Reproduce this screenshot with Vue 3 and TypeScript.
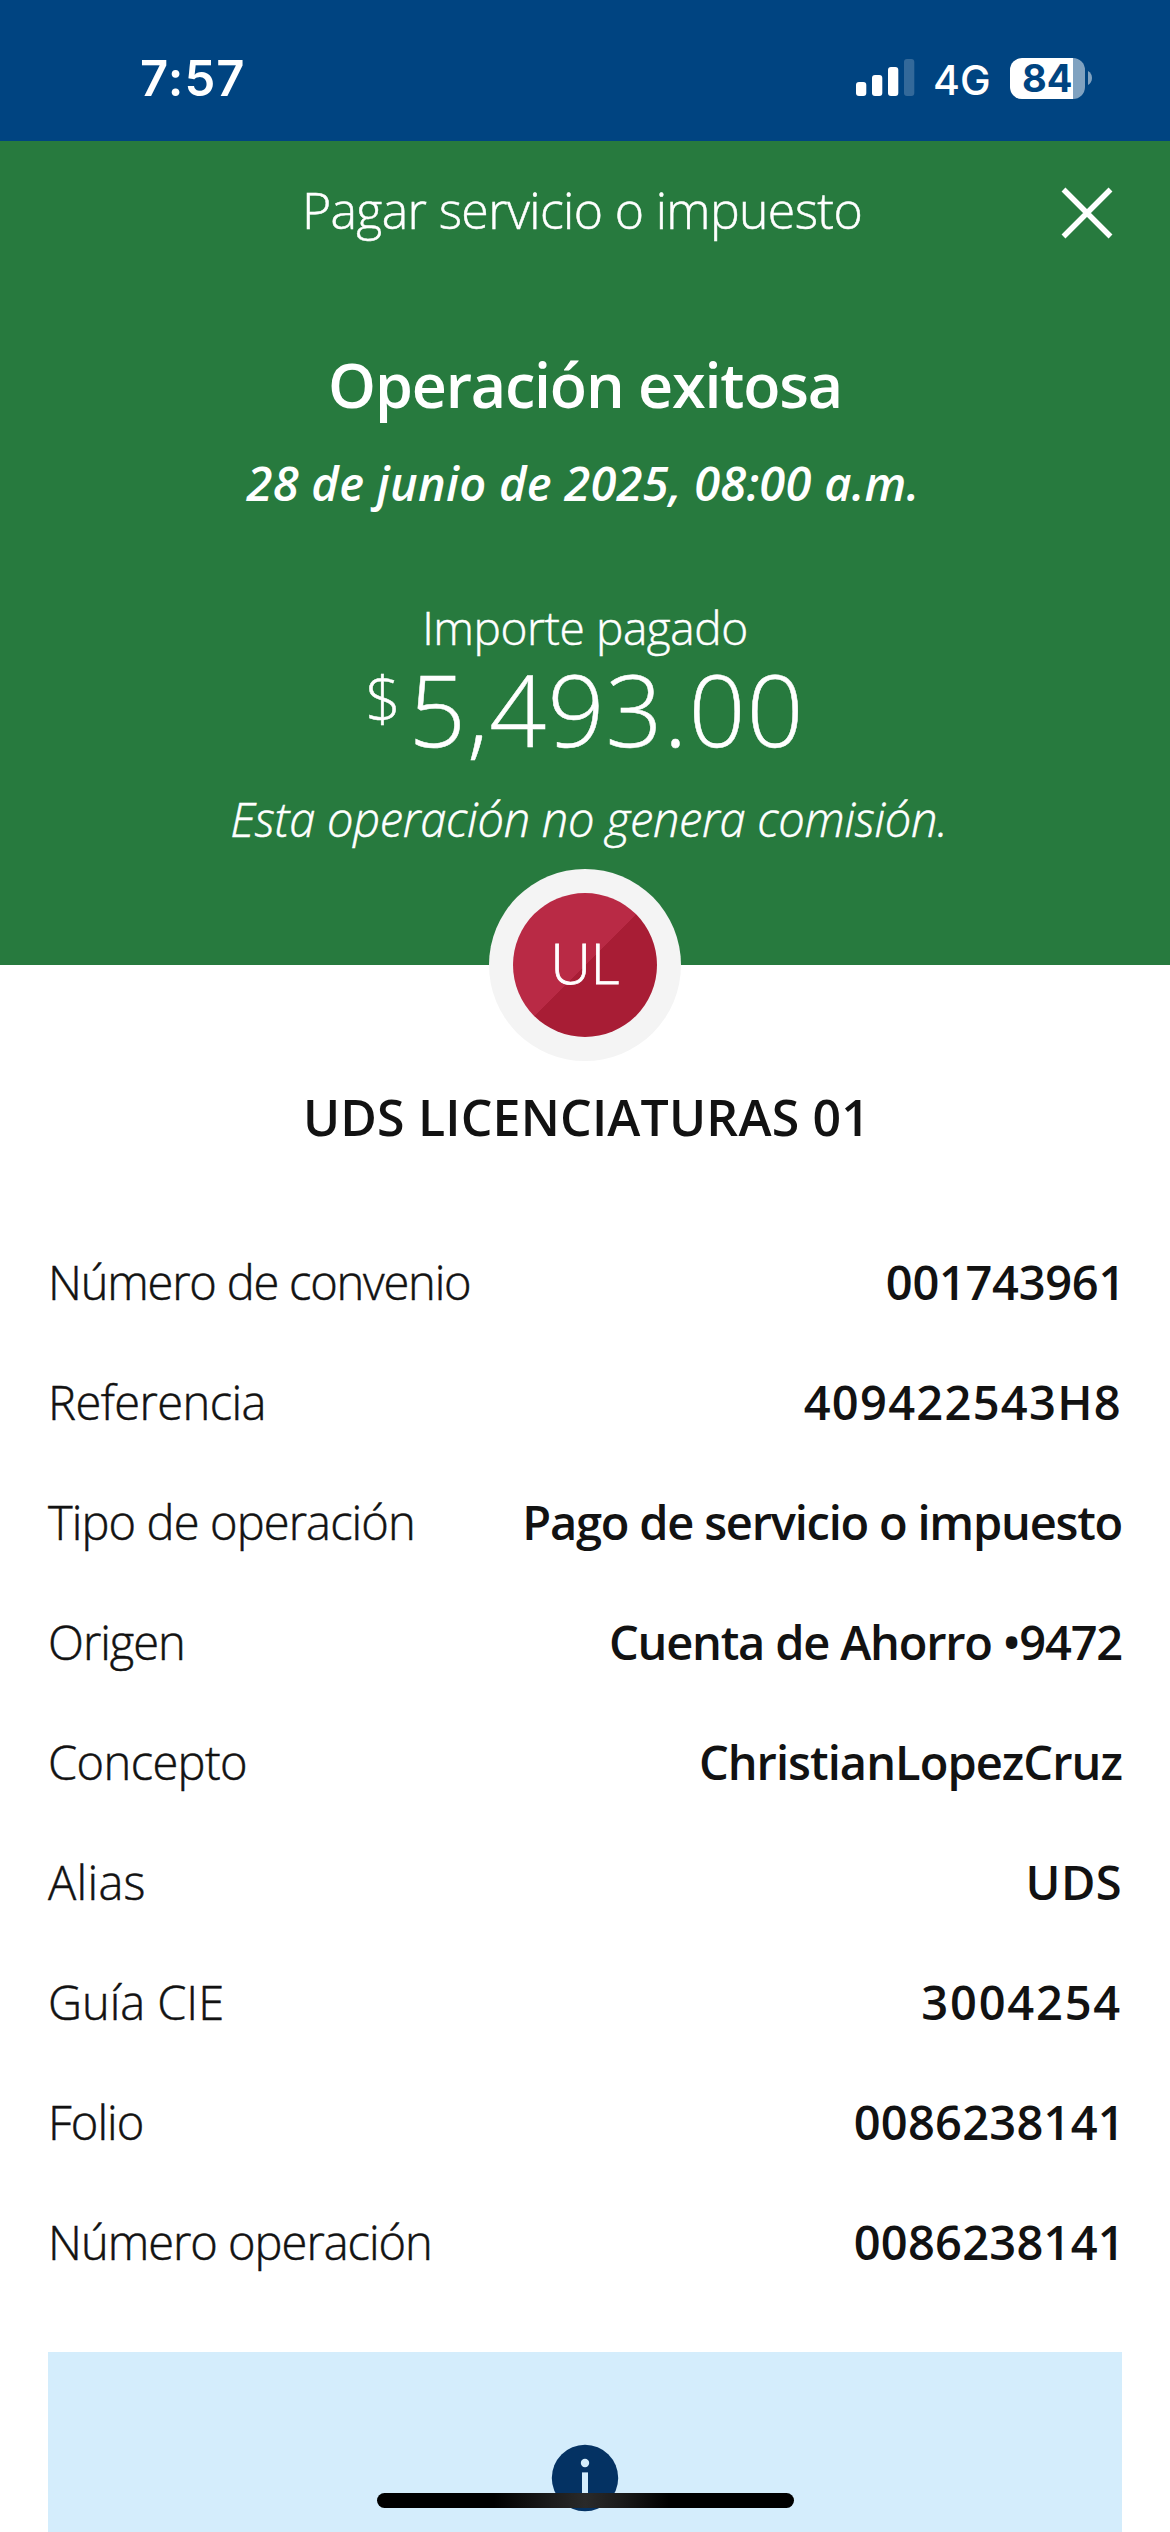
<script setup lang="ts">
interface Row {
  label: string
  value: string
  labelTracking: number
  valueTracking: number
}

const rows: Row[] = [
  { label: 'Número de convenio', value: '001743961', labelTracking: -1.2, valueTracking: -0.3 },
  { label: 'Referencia', value: '409422543H8', labelTracking: -0.55, valueTracking: 1.3 },
  { label: 'Tipo de operación', value: 'Pago de servicio o impuesto', labelTracking: -0.88, valueTracking: -1.22 },
  { label: 'Origen', value: 'Cuenta de Ahorro •9472', labelTracking: -1, valueTracking: -1.2 },
  { label: 'Concepto', value: 'ChristianLopezCruz', labelTracking: -0.6, valueTracking: -0.95 },
  { label: 'Alias', value: 'UDS', labelTracking: 0.3, valueTracking: 0.4 },
  { label: 'Guía CIE', value: '3004254', labelTracking: -0.05, valueTracking: 1.8 },
  { label: 'Folio', value: '0086238141', labelTracking: -0.9, valueTracking: 0.25 },
  { label: 'Número operación', value: '0086238141', labelTracking: -1, valueTracking: 0.25 },
]
</script>

<template>
  <div class="screen">
    <div class="status-bar">
      <span class="clock">7:57</span>
      <div class="indicators">
        <svg class="signal" width="59" height="38" viewBox="0 0 59 38">
          <rect x="0" y="23" width="10.3" height="14" rx="3" />
          <rect x="16" y="16" width="10.3" height="21" rx="3" />
          <rect x="32" y="8" width="10.3" height="29" rx="3" />
          <rect class="off" x="48" y="0" width="10.3" height="37" rx="3" />
        </svg>
        <span class="network">4G</span>
        <div class="battery">
          <div class="cell"><span class="level">84</span></div>
          <svg class="nub" width="4" height="14" viewBox="0 0 4 14">
            <path d="M0 0C2.6 1.4 4 4 4 7S2.6 12.600 0 14Z" />
          </svg>
        </div>
      </div>
    </div>

    <section class="hero">
      <header class="title-bar">
        <span class="title">Pagar servicio o impuesto</span>
        <svg class="close" width="52" height="52" viewBox="0 0 52 52">
          <path d="M2.500 2.500L49.500 49.500M49.500 2.500L2.500 49.500" />
        </svg>
      </header>
      <h1 class="result">Operación exitosa</h1>
      <p class="date">28 de junio de 2025, 08:00 a.m.</p>
      <p class="amount-label">Importe pagado</p>
      <p class="amount"><span class="currency">$</span><span class="figure">5,493.00</span></p>
      <p class="fee">Esta operación no genera comisión.</p>
    </section>

    <div class="avatar"><div class="initials"><span>UL</span></div></div>
    <h2 class="payee">UDS LICENCIATURAS 01</h2>

    <dl class="details">
      <div v-for="row in rows" :key="row.label" class="row">
        <dt :style="{ letterSpacing: row.labelTracking + 'px' }">{{ row.label }}</dt>
        <dd :class="{ 'ends-in-one': row.value.endsWith('1') }" :style="{ letterSpacing: row.valueTracking + 'px' }">
          {{ row.value }}
        </dd>
      </div>
    </dl>

    <div class="notice">
      <svg width="68" height="68" viewBox="0 0 68 68">
        <circle cx="34" cy="34" r="33.2" fill="#043263" />
        <circle cx="34" cy="19" r="4.2" fill="#d4edfc" />
        <rect x="31" y="28.400" width="6" height="24" fill="#d4edfc" />
      </svg>
    </div>
    <div class="home-indicator"></div>
  </div>
</template>

<style>
body {
  margin: 0;
  background: #fff;
}
</style>

<style scoped>
.screen {
  position: relative;
  display: flex;
  flex-direction: column;
  width: 1170px;
  height: 2532px;
  overflow: hidden;
  background: #fff;
  color: #121212;
  font-family: 'Open Sans', 'Noto Sans', sans-serif;
}

.status-bar {
  flex: none;
  display: flex;
  justify-content: space-between;
  box-sizing: border-box;
  height: 141px;
  padding: 48px 78px 33px 140px;
  background: #004481;
  color: #fff;
  font-family: Inter, 'Liberation Sans', sans-serif;
}
.clock {
  font-size: 49px;
  font-weight: 600;
  line-height: 62px;
  letter-spacing: 1.1px;
}
.indicators {
  display: flex;
  align-items: center;
  height: 60px;
}
.signal {
  margin-right: 18px;
  fill: #fff;
}
.signal .off {
  opacity: 0.2;
}
.network {
  width: 77px;
  font-size: 41px;
  font-weight: 500;
  line-height: 60px;
  margin-top: 3px;
}
.battery {
  display: flex;
  align-items: center;
}
.cell {
  box-sizing: border-box;
  width: 75px;
  height: 41px;
  padding-left: 12px;
  border-radius: 12px;
  background: linear-gradient(to right, #fff 63px, #80a2c0 63px);
  color: #004481;
}
.level {
  font-size: 38px;
  font-weight: 700;
  line-height: 41px;
}
.nub {
  margin-left: 3px;
  fill: #80a2c0;
}

.hero {
  flex: none;
  height: 824px;
  background: #277a3e;
  color: #fff;
  text-align: center;
}
.title-bar {
  position: relative;
  height: 136px;
}
.title {
  display: block;
  padding-right: 6px;
  font-size: 50px;
  font-weight: 300;
  line-height: 138px;
  letter-spacing: -0.65px;
}
.title,
.amount-label,
.amount,
.fee,
dt {
  -webkit-text-stroke: 0.5px currentColor;
}
.close {
  position: absolute;
  top: 46px;
  right: 57px;
  fill: none;
  stroke: #fff;
  stroke-width: 5.5;
}
.result {
  margin: 68px 0 0;
  font-size: 61px;
  font-weight: 600;
  line-height: 80px;
  letter-spacing: -1.2px;
}
.date {
  margin: 28px 4px 0 0;
  font-size: 47px;
  font-style: italic;
  font-weight: 600;
  line-height: 60px;
  letter-spacing: 0.27px;
}
.amount-label {
  margin: 84px 0 0;
  font-size: 46px;
  font-weight: 300;
  line-height: 60px;
  letter-spacing: -0.42px;
}
.amount {
  display: flex;
  justify-content: center;
  align-items: flex-start;
  height: 100px;
  margin: 1px 0 0;
  font-weight: 300;
}
.currency {
  margin-right: 8px;
  font-size: 62px;
  line-height: 80px;
}
.figure {
  font-size: 100px;
  line-height: 100px;
  letter-spacing: 1px;
}
.fee {
  margin: 31px 0 0 8px;
  font-size: 47px;
  font-style: italic;
  font-weight: 300;
  line-height: 60px;
  letter-spacing: -0.28px;
}

.avatar {
  position: relative;
  flex: none;
  align-self: center;
  box-sizing: border-box;
  width: 192px;
  height: 192px;
  margin-top: -96px;
  padding: 24px;
  border-radius: 50%;
  background: #f4f4f4;
}
.initials {
  height: 144px;
  border-radius: 50%;
  background: linear-gradient(135deg, #b92a45 50%, #a81d35 50%);
  color: #fff;
  font-size: 56px;
  font-weight: 300;
  line-height: 138px;
  text-align: center;
  -webkit-text-stroke: 0.8px currentColor;
}
.payee {
  margin: 26px 0 75px;
  padding-left: 3px;
  font-size: 50px;
  font-weight: 600;
  line-height: 60px;
  letter-spacing: 0.18px;
  text-align: center;
}

.details {
  margin: 0 48px;
}
.row {
  display: flex;
  justify-content: space-between;
  height: 120px;
  font-size: 47px;
  line-height: 120px;
  white-space: nowrap;
}
dt {
  font-weight: 300;
}
dd {
  margin: 0;
  font-weight: 600;
}
/* The figure 1 carries a wide right bearing. */
.ends-in-one {
  margin-right: -3px;
}

.notice {
  display: flex;
  justify-content: center;
  align-items: flex-start;
  flex: 1;
  margin: 50px 48px 0;
  padding-top: 92px;
  background: #d4edfc;
}
.home-indicator {
  position: absolute;
  bottom: 24px;
  left: 377px;
  width: 417px;
  height: 15px;
  border-radius: 8px;
  background: linear-gradient(to right, #000 28%, #1c1c1c 42%, #2a2a2a 50%, #1c1c1c 58%, #000 70%);
}
</style>
